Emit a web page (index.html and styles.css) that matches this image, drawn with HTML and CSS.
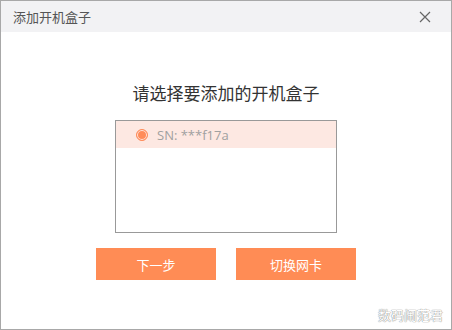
FILE: index.html
```html
<!DOCTYPE html>
<html lang="zh-CN">
<head>
  <meta charset="UTF-8">
  <title>添加开机盒子</title>
  <link rel="stylesheet" href="styles.css">
</head>
<body>
  <div class="dialog">
    <!-- Title bar -->
    <div class="title-bar">
      <span class="title">添加开机盒子</span>
      <svg class="close" width="12" height="12" viewBox="0 0 12 12">
        <path d="M1 1 L11 11 M11 1 L1 11" stroke="#666" stroke-width="1.2" fill="none"/>
      </svg>
    </div>

    <!-- Content -->
    <div class="content">
      <h2>请选择要添加的开机盒子</h2>
      <div class="box-list">
        <div class="box-item selected">
          <span class="radio"></span>
          <span class="sn">SN: ***f17a</span>
        </div>
      </div>
      <div class="actions">
        <button class="btn">下一步</button>
        <button class="btn">切换网卡</button>
      </div>
      <div class="watermark">数码闹范君</div>
    </div>
  </div>
</body>
</html>
```

FILE: styles.css
```css
/* General styling */
body {
  margin: 0;
  font-family: "Noto Sans CJK SC", "Liberation Sans", sans-serif;
}

.dialog {
  width: 452px;
  height: 330px;
  box-sizing: border-box;
  border: 1px solid #a8a8a8;
  background: #fff;
  display: flex;
  flex-direction: column;
}

/* Title bar */
.title-bar {
  height: 31px;
  background: #f2f2f4;
  display: flex;
  align-items: center;
  justify-content: space-between;
  padding: 0 20px 0 12px;
  flex-shrink: 0;
}

.title {
  font-size: 13px;
  color: #555;
}

/* Content */
.content {
  flex: 1;
  display: flex;
  flex-direction: column;
  align-items: center;
  position: relative;
}

h2 {
  margin: 49px 0 0;
  font-size: 17px;
  font-weight: normal;
  color: #333;
  line-height: 24px;
}

.box-list {
  width: 220px;
  height: 111px;
  margin-top: 15px;
  border: 1px solid #999;
}

.box-item {
  height: 27px;
  display: flex;
  align-items: center;
  padding-left: 20px;
}

.box-item.selected {
  background: #fde8e2;
}

.radio {
  width: 10px;
  height: 10px;
  border-radius: 50%;
  border: 1px solid #ff8c5a;
  background: #ff8c5a;
  box-shadow: inset 0 0 0 1px #fde8e2;
  margin-right: 9px;
}

.sn {
  font-size: 13px;
  color: #a0a0a0;
  font-family: "Open Sans", "Noto Sans", sans-serif;
}

.actions {
  display: flex;
  gap: 20px;
  margin-top: 15px;
}

.btn {
  width: 120px;
  height: 32px;
  border: none;
  background: #ff8c55;
  color: #fff;
  font-size: 13px;
  font-family: "Noto Sans CJK SC", sans-serif;
  cursor: pointer;
}

.watermark {
  position: absolute;
  right: 8px;
  bottom: 5px;
  font-size: 13px;
  color: #fff;
  text-shadow: 0 0 1px #888, 0 0 1px #888;
}
```
